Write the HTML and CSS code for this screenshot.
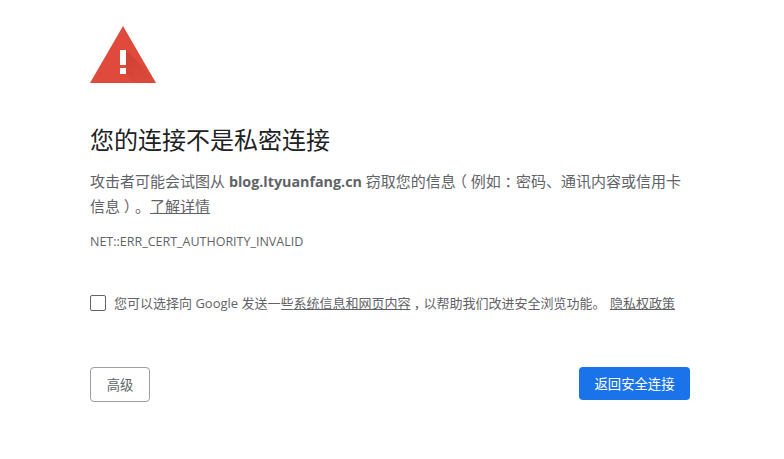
FILE: index.html
```html
<!DOCTYPE html>
<html lang="zh-CN">
<head>
<meta charset="utf-8">
<title>隐私设置错误</title>
<link rel="stylesheet" href="styles.css">
</head>
<body>
<main class="page">
  <svg class="icon" width="66" height="57" viewBox="0 0 66 57" aria-hidden="true">
    <defs>
      <linearGradient id="shade" x1="36" y1="24" x2="58" y2="57" gradientUnits="userSpaceOnUse">
        <stop offset="0" stop-color="#bf3a2b" stop-opacity="0.55"/>
        <stop offset="1" stop-color="#bf3a2b" stop-opacity="0.08"/>
      </linearGradient>
    </defs>
    <polygon points="33,0 66,57 0,57" fill="#df4a3c"/>
    <polygon points="36,24 61,49 66,57 45,57 36,48" fill="url(#shade)"/>
    <rect x="30" y="24" width="6" height="15" fill="#fff"/>
    <rect x="30" y="42" width="6" height="6" fill="#fff"/>
  </svg>
  <h1 class="title">您的连接不是私密连接</h1>
  <p class="message">攻击者可能会试图从 <strong class="host">blog.ltyuanfang.cn</strong> 窃取您的信息<span class="cp">（</span>例如<span class="cp">：</span>密码、通讯内容或信用卡信息<span class="cp">）</span>。<a class="link" href="#">了解详情</a></p>
  <p class="code">NET::ERR_CERT_AUTHORITY_INVALID</p>
  <label class="optin">
    <span class="check"></span>
    <span>您可以选择向 Google 发送一些<a class="link" href="#">系统信息和网页内容</a><span class="cp">，</span>以帮助我们改进安全浏览功能。 <a class="link policy" href="#">隐私权政策</a></span>
  </label>
  <div class="actions">
    <button class="btn btn-secondary" type="button">高级</button>
    <button class="btn btn-primary" type="button">返回安全连接</button>
  </div>
</main>
</body>
</html>
```
FILE: styles.css
```css
* { box-sizing: border-box; }
html, body { margin: 0; background: #fff; }
body {
  font-family: "Open Sans", "Noto Sans CJK SC", sans-serif;
  color: #646464;
  text-spacing-trim: space-all;
}
.page {
  width: 600px;
  margin-left: 90px;
  padding-top: 26px;
}
.icon { display: block; }
.title {
  margin: 41px 0 0;
  font-size: 24px;
  line-height: 32px;
  font-weight: 400;
  color: #202124;
}
.message {
  margin: 13px 0 0;
  font-size: 15px;
  line-height: 24px;
  color: #5f6368;
}
.host { font-weight: 700; font-size: 14.3px; }
.cp { font-feature-settings: "halt"; padding: 0 0.25em; }
.link { color: #5f6368; text-decoration: underline; }
.policy { margin-left: 1px; }
.code {
  margin: 16px 0 0;
  font-size: 12.5px;
  line-height: 16px;
  color: #5f6368;
}
.optin {
  display: flex;
  align-items: center;
  gap: 8px;
  margin-top: 43px;
  font-size: 13px;
  line-height: 20px;
  color: #5f6368;
}
.check {
  flex: none;
  width: 16px;
  height: 16px;
  border: 1px solid #5f6368;
  border-radius: 2px;
}
.actions {
  display: flex;
  justify-content: space-between;
  margin-top: 54px;
}
.btn {
  height: 35px;
  padding: 0;
  border-radius: 4px;
  font-family: inherit;
  font-size: 13.33px;
}
.btn-secondary {
  width: 60px;
  background: #fff;
  border: 1px solid #9aa0a6;
  color: #5f6368;
}
.btn-primary {
  width: 111px;
  height: 33px;
  background: #1a73e8;
  border: 0;
  color: #fff;
}
```
